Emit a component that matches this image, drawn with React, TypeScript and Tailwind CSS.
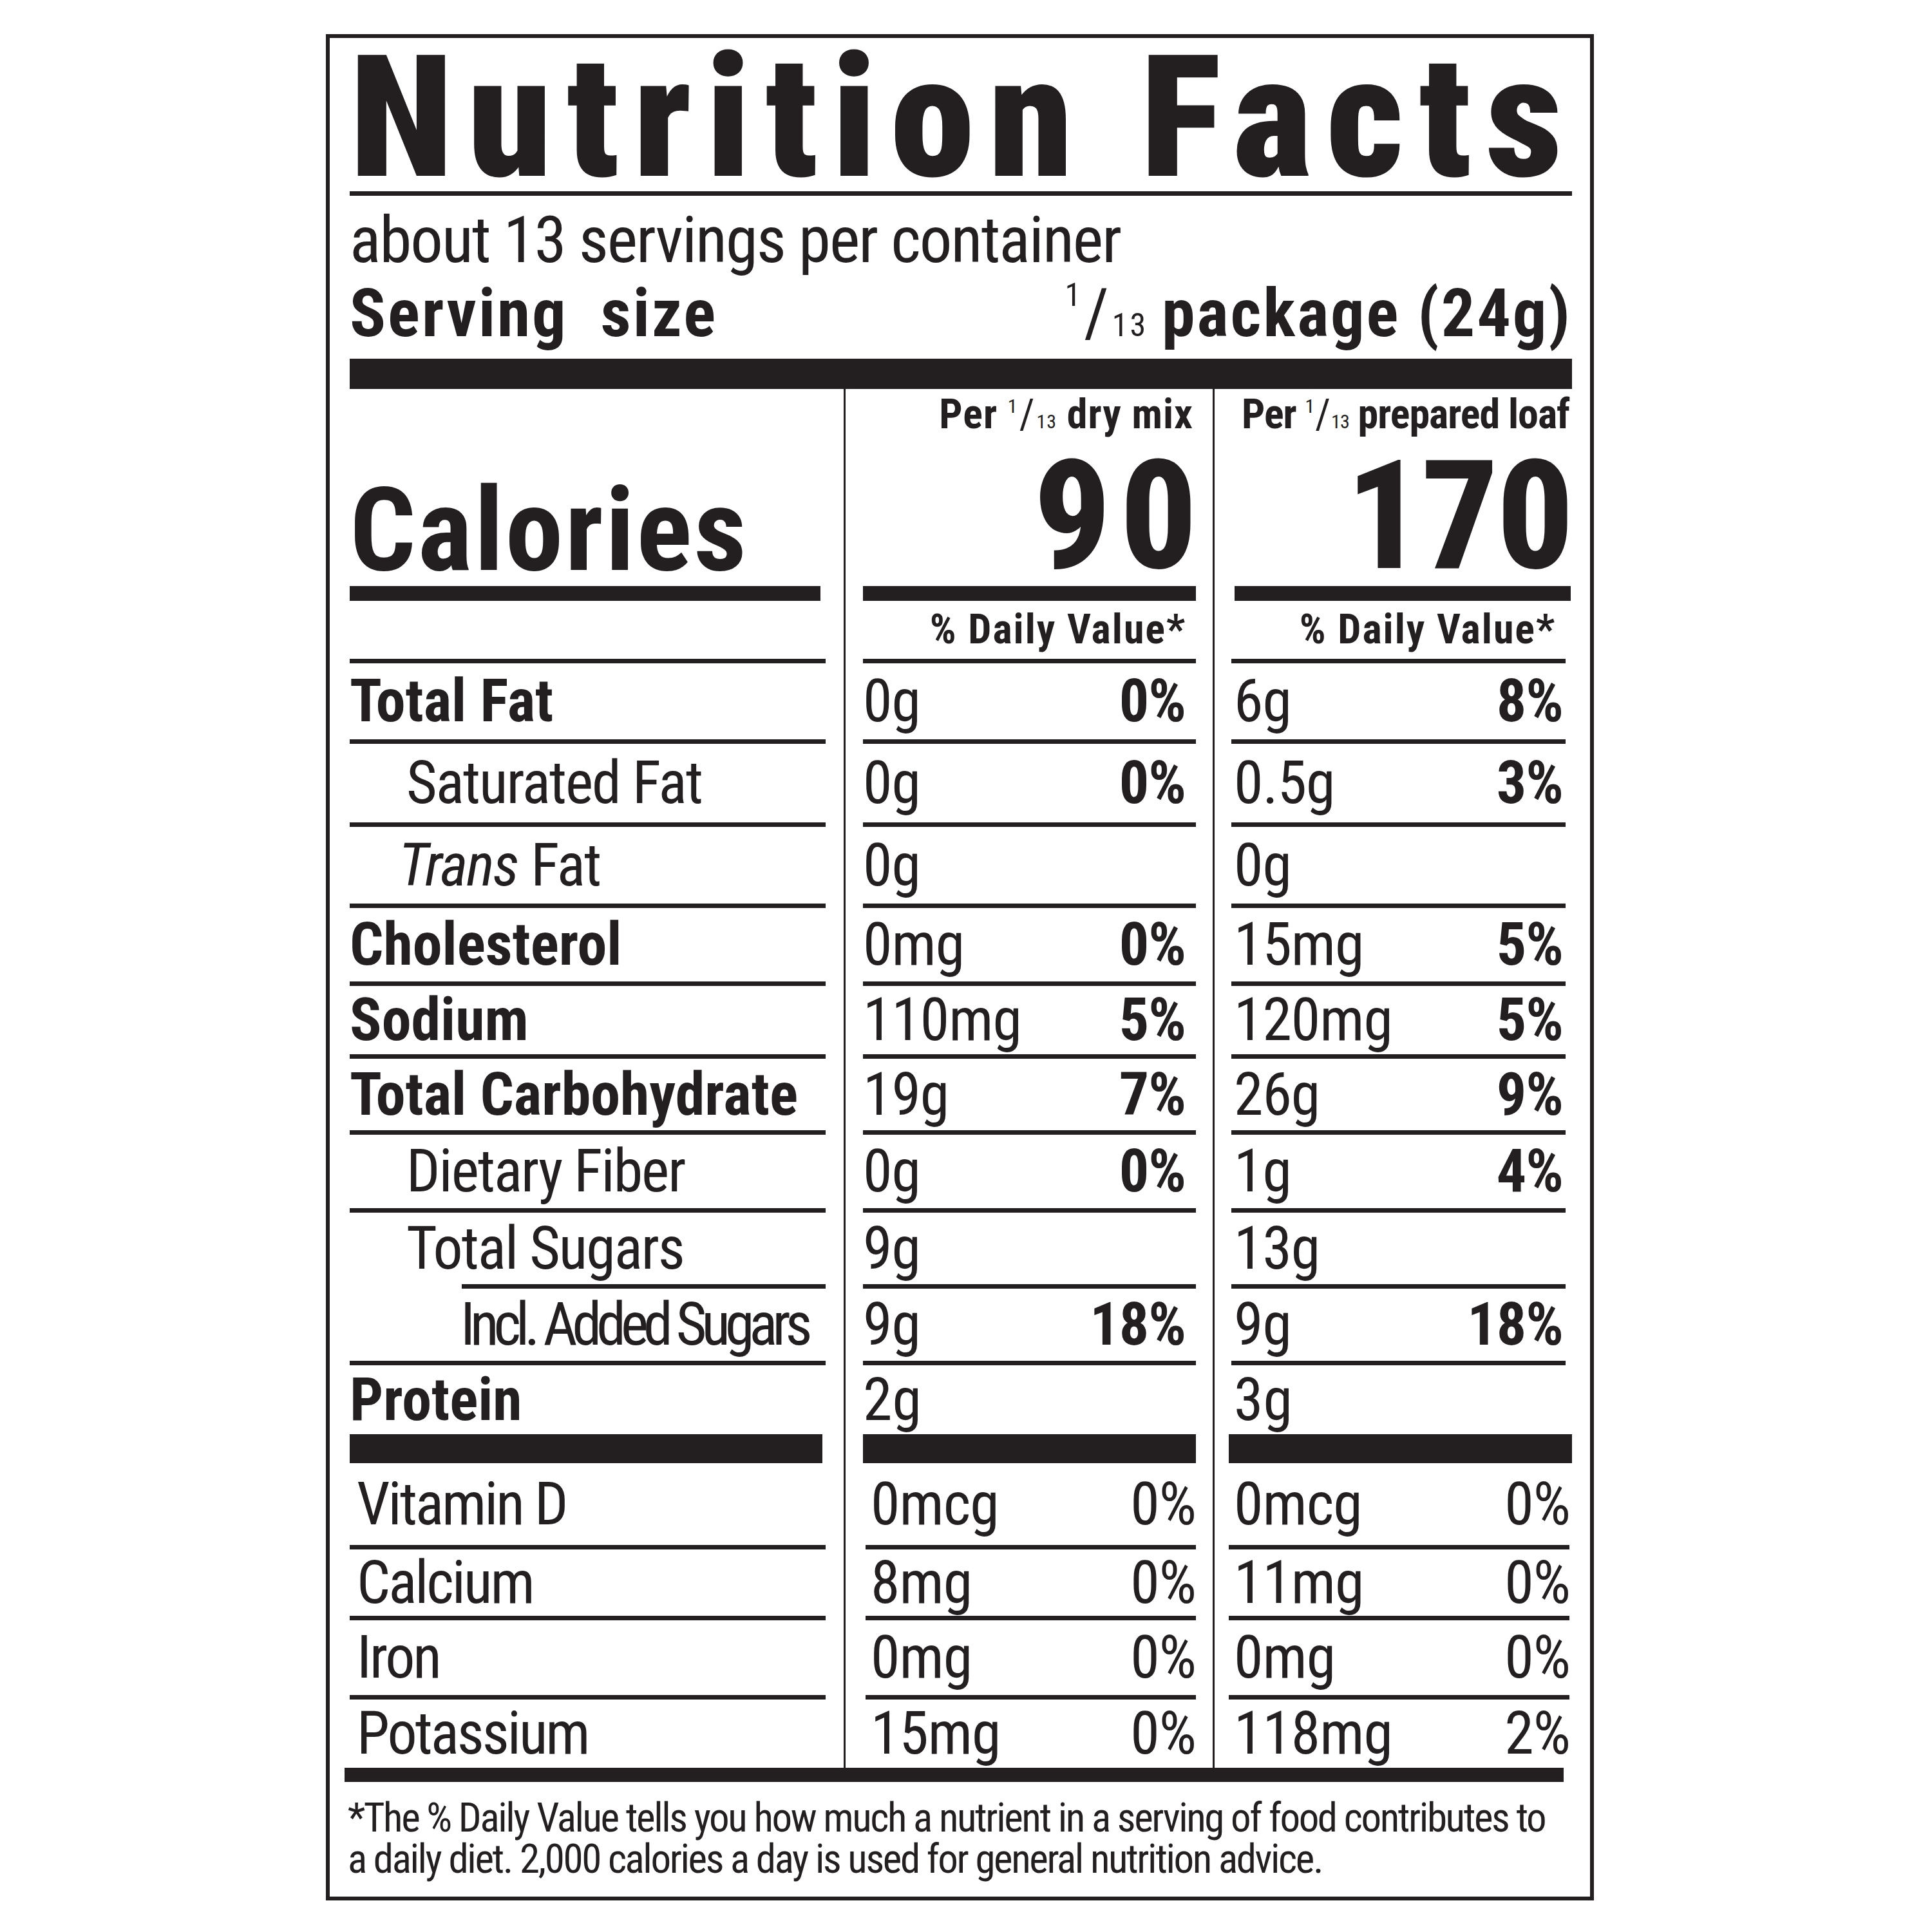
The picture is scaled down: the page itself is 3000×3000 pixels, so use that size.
import type { ReactNode } from 'react'

type Nutrient = {
  label: string
  bold?: boolean
  trans?: boolean
  pad?: string
  h: string
  a: string
  ap?: string
  b: string
  bp?: string
  lineIndent?: string
}

const nutrients: Nutrient[] = [
  { label: 'Total Fat', bold: true, h: 'h-[118px]', a: '0g', ap: '0%', b: '6g', bp: '8%' },
  { label: 'Saturated Fat', pad: 'pl-[88px] tracking-[-2px]', h: 'h-[122px]', a: '0g', ap: '0%', b: '0.5g', bp: '3%' },
  { label: 'Fat', trans: true, pad: 'pl-[76px] tracking-[-2px]', h: 'h-[119px]', a: '0g', b: '0g' },
  { label: 'Cholesterol', bold: true, h: 'h-[114px]', a: '0mg', ap: '0%', b: '15mg', bp: '5%' },
  { label: 'Sodium', bold: true, h: 'h-[106px]', a: '110mg', ap: '5%', b: '120mg', bp: '5%' },
  { label: 'Total Carbohydrate', bold: true, h: 'h-[111px]', a: '19g', ap: '7%', b: '26g', bp: '9%' },
  { label: 'Dietary Fiber', pad: 'pl-[88px] tracking-[-2px]', h: 'h-[114px]', a: '0g', ap: '0%', b: '1g', bp: '4%' },
  { label: 'Total Sugars', pad: 'pl-[88px] tracking-[-2px]', h: 'h-[111px]', a: '9g', b: '13g', lineIndent: 'ml-[174px]' },
  { label: 'Incl. Added Sugars', pad: 'pl-[172px] tracking-[-8px]', h: 'h-[112px]', a: '9g', ap: '18%', b: '9g', bp: '18%' },
]

const vitamins = [
  { label: 'Vitamin D', h: 'h-[127px]', a: '0mcg', ap: '0%', b: '0mcg', bp: '0%' },
  { label: 'Calcium', h: 'h-[103px]', a: '8mg', ap: '0%', b: '11mg', bp: '0%' },
  { label: 'Iron', h: 'h-[116px]', a: '0mg', ap: '0%', b: '0mg', bp: '0%' },
  { label: 'Potassium', h: 'h-[106px]', a: '15mg', ap: '0%', b: '118mg', bp: '2%' },
]

function Row({ c1, c2, c3 }: { c1: ReactNode; c2: ReactNode; c3: ReactNode }) {
  return (
    <div className="flex">
      <div className="w-[739px] flex flex-col">{c1}</div>
      <div className="w-[58px] flex justify-center">
        <div className="w-[3px] bg-[#231f20]" />
      </div>
      <div className="w-[517px] flex flex-col">{c2}</div>
      <div className="w-[55px] flex justify-center">
        <div className="w-[3px] bg-[#231f20]" />
      </div>
      <div className="flex-1 flex flex-col">{c3}</div>
    </div>
  )
}

const Line = ({ extra = '' }: { extra?: string }) => <div className={`h-[7px] bg-[#231f20] ${extra}`} />

function PerFrac() {
  return (
    <>
      <span className="text-[30px] leading-none font-normal align-[24px] mr-[2px]">1</span>
      <span className="font-normal">/</span>
      <span className="text-[30px] leading-none font-normal ml-[2px]">13</span>
    </>
  )
}

export default function App() {
  return (
    <div className="w-[3000px] h-[3000px] bg-white pt-[53px] pl-[506px] text-[#231f20] [font-family:Roboto,'Liberation_Sans',sans-serif] [font-stretch:75%]">
      <div className="w-[1969px] border-[6px] border-[#231f20] pl-[31px] pr-[28px] pb-[26px]">
        <h1 className="pt-[19px] text-[264px] leading-[210px] font-black tracking-[22px] whitespace-nowrap">
          Nutrition Facts
        </h1>
        <Line extra="mt-[9px]" />

        <div className="mt-[18px] text-[101px] leading-none tracking-[-2px] whitespace-nowrap">about 13 servings per container</div>
        <div className="mt-[10px] flex justify-between items-baseline text-[104px] leading-none font-bold tracking-[3px] whitespace-nowrap">
          <span className="[word-spacing:24px]">Serving size</span>
          <span>
            <span className="text-[50px] leading-none font-normal align-[47px] mr-[2px]">1</span>
            <span className="font-normal">/</span>
            <span className="text-[50px] leading-none font-normal ml-[2px] mr-[22px]">13</span>
            package (24g)
          </span>
        </div>
        <div className="mt-[18px] h-[47px] bg-[#231f20]" />

        {/* calories header */}
        <Row
          c1={
            <div className="h-[306px] flex items-end pb-[1px]">
              <span className="text-[180px] leading-[170px] font-bold tracking-[3px]">Calories</span>
            </div>
          }
          c2={
            <div className="h-[306px] flex flex-col items-end pr-[4px] pt-[8px]">
              <div className="text-[64px] leading-none font-bold tracking-[1px] whitespace-nowrap">
                Per <PerFrac /> dry mix
              </div>
              <div className="mt-[26px] -mr-[20px] text-[236px] leading-[200px] font-extrabold tracking-[14px]">90</div>
            </div>
          }
          c3={
            <div className="h-[306px] flex flex-col items-end pr-[4px] pt-[8px]">
              <div className="text-[64px] leading-none font-bold tracking-[-1px] whitespace-nowrap">
                Per <PerFrac /> prepared loaf
              </div>
              <div className="mt-[26px] -mr-[4px] text-[236px] leading-[200px] font-extrabold tracking-[-3px]">170</div>
            </div>
          }
        />
        <Row
          c1={<div className="h-[23px] w-[731px] bg-[#231f20]" />}
          c2={<div className="h-[23px] bg-[#231f20]" />}
          c3={<div className="h-[23px] ml-[5px] mr-[2px] bg-[#231f20]" />}
        />
        <Row
          c1={
            <>
              <div className="h-[90px]" />
              <Line />
            </>
          }
          c2={
            <>
              <div className="h-[90px] flex items-center justify-end pr-[15px] text-[64px] leading-none font-bold tracking-[2px]">% Daily Value*</div>
              <Line />
            </>
          }
          c3={
            <>
              <div className="h-[90px] flex items-center justify-end pr-[25px] text-[64px] leading-none font-bold tracking-[2px]">% Daily Value*</div>
              <Line extra="mr-[10px]" />
            </>
          }
        />

        {nutrients.map(n => (
          <Row
            key={n.label}
            c1={
              <>
                <div className={`${n.h} flex items-center text-[92px] leading-none whitespace-nowrap ${n.pad ?? ''} ${n.bold ? 'font-bold' : ''}`}>
                  {n.trans && <i className="mr-[20px]">Trans</i>}
                  {n.label}
                </div>
                <Line extra={n.lineIndent ?? ''} />
              </>
            }
            c2={
              <>
                <div className={`${n.h} flex items-center justify-between pr-[16px] text-[92px] leading-none tracking-[-1px]`}>
                  <span>{n.a}</span>
                  <span className="font-bold">{n.ap}</span>
                </div>
                <Line />
              </>
            }
            c3={
              <>
                <div className={`${n.h} flex items-center justify-between pl-[4px] pr-[14px] text-[92px] leading-none tracking-[-1px]`}>
                  <span>{n.b}</span>
                  <span className="font-bold">{n.bp}</span>
                </div>
                <Line extra="mr-[10px]" />
              </>
            }
          />
        ))}

        <Row
          c1={<div className="h-[107px] flex items-center text-[92px] leading-none font-bold">Protein</div>}
          c2={<div className="h-[107px] flex items-center text-[92px] leading-none">2g</div>}
          c3={<div className="h-[107px] flex items-center pl-[4px] text-[92px] leading-none">3g</div>}
        />
        <Row
          c1={<div className="h-[45px] w-[734px] bg-[#231f20]" />}
          c2={<div className="h-[45px] bg-[#231f20]" />}
          c3={<div className="h-[45px] -ml-[4px] bg-[#231f20]" />}
        />

        {vitamins.map((v, i) => (
          <Row
            key={v.label}
            c1={
              <>
                <div className={`${v.h} flex items-center pl-[11px] text-[92px] leading-none tracking-[-3px]`}>{v.label}</div>
                {i < vitamins.length - 1 && <Line />}
              </>
            }
            c2={
              <>
                <div className={`${v.h} flex items-center justify-between pl-[12px] text-[92px] leading-none tracking-[-1px]`}>
                  <span>{v.a}</span>
                  <span>{v.ap}</span>
                </div>
                {i < vitamins.length - 1 && <Line extra="ml-[4px]" />}
              </>
            }
            c3={
              <>
                <div className={`${v.h} flex items-center justify-between pl-[4px] pr-[3px] text-[92px] leading-none tracking-[-1px]`}>
                  <span>{v.b}</span>
                  <span>{v.bp}</span>
                </div>
                {i < vitamins.length - 1 && <Line extra="-ml-[4px] mr-[4px]" />}
              </>
            }
          />
        ))}

        <div className="-ml-[8px] w-[1893px] h-[22px] bg-[#231f20]" />

        <div className="mt-[24px] -ml-[3px] text-[63px] leading-[64px] tracking-[-2.4px] whitespace-nowrap">
          <div>*The % Daily Value tells you how much a nutrient in a serving of food contributes to</div>
          <div>a daily diet. 2,000 calories a day is used for general nutrition advice.</div>
        </div>
      </div>
    </div>
  )
}
